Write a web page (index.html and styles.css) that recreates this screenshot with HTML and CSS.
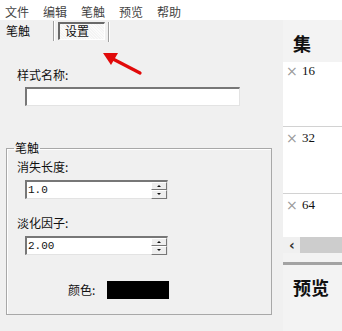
FILE: index.html
```html
<!DOCTYPE html>
<html lang="zh">
<head>
<meta charset="utf-8">
<link rel="stylesheet" href="styles.css">
</head>
<body>
<div class="app">
  <div class="menubar">
    <span>文件</span><span>编辑</span><span>笔触</span><span>预览</span><span>帮助</span>
  </div>
  <div class="main">
    <div class="left">
      <div class="tabs">
        <span class="tab-label">笔触</span>
        <span class="sep sep1"></span>
        <span class="tab-btn">设置</span>
        <span class="sep sep2"></span>
      </div>
      <div class="label l-name">样式名称:</div>
      <div class="textbox name-box"></div>
      <fieldset class="group">
        <legend>笔触</legend>
        <div class="label">消失长度:</div>
        <div class="textbox spin s1"><span class="val">1.0</span>
          <span class="spinbtns"><span class="sb up"></span><span class="sb down"></span></span>
        </div>
        <div class="label l-fade">淡化因子:</div>
        <div class="textbox spin s2"><span class="val">2.00</span>
          <span class="spinbtns"><span class="sb up"></span><span class="sb down"></span></span>
        </div>
        <div class="color-row">
          <span class="label">颜色:</span>
          <span class="swatch"></span>
        </div>
      </fieldset>
    </div>
    <div class="right">
      <div class="panel-title title-top">集</div>
      <div class="list">
        <div class="item i1"><span class="x">×</span><span class="num">16</span></div>
        <div class="item i2"><span class="x">×</span><span class="num">32</span></div>
        <div class="item i3"><span class="x">×</span><span class="num">64</span></div>
      </div>
      <div class="hscroll"><span class="arr">&lsaquo;</span><span class="thumb"></span></div>
      <div class="divider"></div>
      <div class="panel-title title-bottom">预览</div>
    </div>
  </div>
  <svg class="arrow" width="50" height="30" viewBox="0 0 50 30">
    <line x1="43" y1="24" x2="16" y2="10" stroke="#e10a0a" stroke-width="3.2" stroke-linecap="round"/>
    <polygon points="6,4 21,4 14,16" fill="#e10a0a"/>
  </svg>
</div>
</body>
</html>
```
FILE: styles.css
```css
* { box-sizing: border-box; }
html, body { margin: 0; padding: 0; }
body {
  width: 342px;
  height: 331px;
  overflow: hidden;
  font-family: "Noto Sans CJK SC", "DejaVu Sans", sans-serif;
  font-size: 12px;
  color: #111;
  background: #f0f0f0;
}
.app { position: relative; width: 342px; height: 331px; display: flex; flex-direction: column; }
.menubar {
  height: 20px;
  background: #fff;
  display: flex;
  align-items: center;
  gap: 14px;
  padding-left: 5px;
  color: #444;
  line-height: 14px;
  padding-top: 3px;
}
.main { flex: 1; display: flex; }
.left { width: 283px; background: #f0f0f0; display: flex; flex-direction: column; }
.tabs { height: 22px; display: flex; align-items: flex-start; position: relative; }
.tab-label { margin-left: 6px; margin-top: 4px; line-height: 14px; }
.sep { width: 2px; height: 20px; border-left: 1px solid #a0a0a0; border-right: 1px solid #fff; margin-top: 1px; }
.sep1 { margin-left: 23px; }
.tab-btn {
  margin-left: 3px;
  margin-top: 2px;
  width: 47px;
  height: 18px;
  border-top: 2px solid #6a6a6a;
  border-left: 2px solid #6a6a6a;
  border-right: 1px solid #fff;
  border-bottom: 1px solid #fff;
  background: repeating-linear-gradient(45deg, #f4f4f4 0 1px, #fbfbfb 1px 2px);
  line-height: 14px;
  padding-left: 5px;
}
.sep2 { margin-left: 3px; margin-top: 2px; }
.label { line-height: 14px; color: #111; }
.l-name { margin-top: 26px; margin-left: 17px; }
.textbox {
  background: #fff;
  border-top: 2px solid #777;
  border-left: 2px solid #777;
  border-right: 1px solid #e3e3e3;
  border-bottom: 1px solid #e3e3e3;
}
.name-box { margin-top: 5px; margin-left: 25px; width: 215px; height: 19px; }
.group {
  margin: 35px 0 0 6px;
  width: 266px;
  height: 174px;
  padding: 5px 0 0 10px;
  border: 1px solid #a8a8a8;
  box-shadow: inset 1px 1px 0 #fff;
  min-width: 0;
}
.group legend { padding: 0 1px; margin-left: -3px; line-height: 14px; }
.spin {
  margin-top: 6px;
  margin-left: 8px;
  width: 143px;
  height: 19px;
  display: flex;
  align-items: center;
  justify-content: space-between;
  position: relative;
}
.val { font-family: "Liberation Mono", monospace; font-size: 11px; padding-left: 1px; color: #111; }
.spinbtns { width: 16px; height: 17px; display: flex; flex-direction: column; margin-right: 0; }
.sb {
  flex: 1;
  background: #eee;
  border-top: 1px solid #fff;
  border-left: 1px solid #fff;
  border-right: 1px solid #777;
  border-bottom: 1px solid #777;
  display: flex;
  align-items: center;
  justify-content: center;
}
.sb::after { content: ""; width: 0; height: 0; border-left: 2px solid transparent; border-right: 2px solid transparent; }
.sb.up::after { border-bottom: 2px solid #111; }
.sb.down::after { border-top: 2px solid #111; }
.l-fade { margin-top: 17px; }
.color-row { margin-top: 26px; margin-left: 51px; display: flex; align-items: center; gap: 12px; }
.swatch { width: 62px; height: 18px; background: #000; }
.right { flex: 1; display: flex; flex-direction: column; background: #f3f3f3; }
.panel-title {
  font-size: 18px;
  font-weight: bold;
  line-height: 20px;
  padding-left: 10px;
  color: #111;
}
.title-top { height: 42px; padding-top: 13px; }
.list { height: 175px; background: #fff; display: flex; flex-direction: column; }
.item { display: flex; align-items: center; height: 14px; box-sizing: content-box; padding-top: 1px; border-bottom: 1px solid #d2d2d2; line-height: 14px; }
.i1 { padding-top: 2px; padding-bottom: 48px; }
.i2 { padding-top: 4px; padding-bottom: 48px; }
.i3 { padding-top: 4px; border-bottom: none; flex: 1; align-items: flex-start; }
.x { color: #9a9a9a; font-size: 14px; width: 19px; padding-left: 3px; font-family: "DejaVu Sans", sans-serif; line-height: 14px; }
.num { font-family: "Liberation Serif", serif; font-size: 13px; color: #111; }
.hscroll { height: 16px; display: flex; align-items: center; background: #f0f0f0; }
.arr { width: 17px; padding-left: 6px; font-family: "DejaVu Sans", sans-serif; font-size: 14px; font-weight: bold; line-height: 14px; color: #333; }
.thumb { flex: 1; height: 16px; background: #cdcdcd; }
.divider { margin-top: 9px; height: 3px; background: #a3a3a3; }
.title-bottom { margin-top: 12px; }
.arrow { position: absolute; left: 97px; top: 49px; }
```
